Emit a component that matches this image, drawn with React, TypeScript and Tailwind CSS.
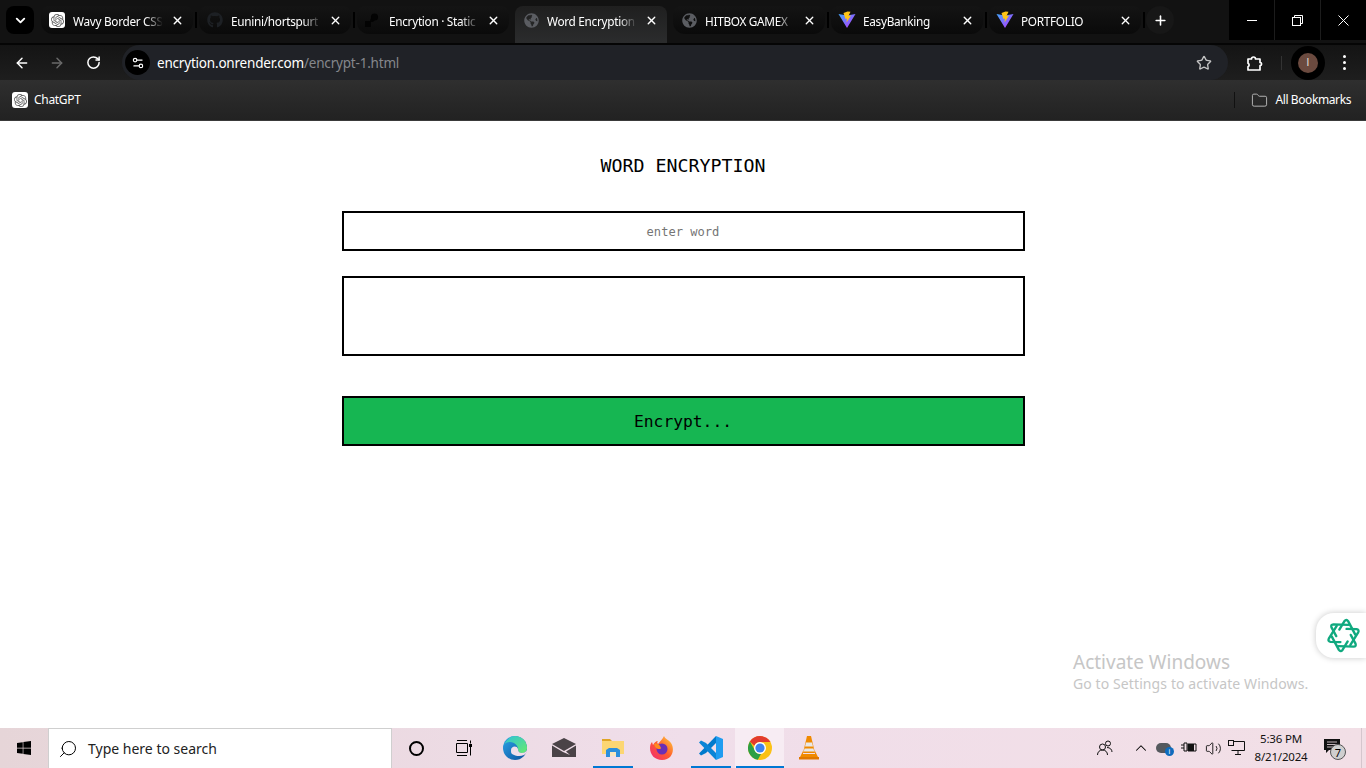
import {
  ArrowLeft,
  ArrowRight,
  ChevronDown,
  ChevronUp,
  Folder,
  Plus,
  RotateCw,
  Search,
  Settings2,
  Star,
  Volume2,
  X,
} from 'lucide-react'
import { FaGithub, FaGlobeAmericas, FaWindows } from 'react-icons/fa'
import { SiOpenai } from 'react-icons/si'

const uiFont = "font-['Noto_Sans',sans-serif]"

function ChatGptIcon({ size = 16 }: { size?: number }) {
  return (
    <span className="flex shrink-0 items-center justify-center rounded-[3px] bg-white" style={{ width: size, height: size }}>
      <SiOpenai className="text-[#5f5f5f]" size={size - 3} />
    </span>
  )
}

function RenderIcon() {
  return (
    <svg width="16" height="16" viewBox="0 0 16 16" className="shrink-0">
      <rect x="0" y="9" width="6" height="6" fill="#030303" />
      <path d="M5 10c0-3 1-4 3-5l2 3-2 2z" fill="#030303" />
      <circle cx="9.5" cy="5" r="3.6" fill="#030303" />
    </svg>
  )
}

function ViteIcon() {
  return (
    <svg width="18" height="18" viewBox="0 0 18 18" className="shrink-0">
      <defs>
        <linearGradient id="vitea" x1="0" y1="0" x2="1" y2="1">
          <stop offset="0" stopColor="#41a6ff" />
          <stop offset="1" stopColor="#bd34fe" />
        </linearGradient>
      </defs>
      <path d="M0.5 3 L9 17 L17.5 3 L9 4.5 Z" fill="url(#vitea)" />
      <path d="M9.5 0.5 L5.5 2 L7.5 8 L9 7.5 L8.5 11.5 L13 4.5 L10.5 5 L12.5 0.8 Z" fill="#ffc517" />
    </svg>
  )
}

const tabs = [
  { title: 'Wavy Border CSS', icon: <ChatGptIcon />, sep: true },
  { title: 'Eunini/hortspurt', icon: <FaGithub size={16} className="shrink-0 text-[#1d2024]" />, sep: true },
  { title: 'Encrytion · Static Site', icon: <RenderIcon />, sep: false },
  { title: 'Word Encryption', icon: <FaGlobeAmericas size={15} className="shrink-0 text-[#5b5d62]" />, active: true, sep: false },
  { title: 'HITBOX GAMEX', icon: <FaGlobeAmericas size={15} className="shrink-0 text-[#5b5d62]" />, sep: true },
  { title: 'EasyBanking', icon: <ViteIcon />, sep: true },
  { title: 'PORTFOLIO', icon: <ViteIcon />, sep: true },
]

function TabStrip() {
  return (
    <div className="flex h-[43px] items-start bg-[#121212] pl-[6px]">
      <div className="mt-[6px] mr-[6px] flex h-[28px] w-[28px] items-center justify-center rounded-lg bg-black">
        <ChevronDown size={15} strokeWidth={3} className="text-white" />
      </div>
      {tabs.map((tab) => (
        <div key={tab.title} className="relative h-[43px] w-[158px] shrink-0">
          <div
            className={
              tab.active
                ? 'mt-[6px] ml-px flex h-[37px] w-[152px] items-start rounded-t-lg bg-gradient-to-b from-[#1f1f1f] to-[#2b2c2d] pt-[6px] pl-[8px]'
                : 'mt-[6px] ml-px flex h-[28px] w-[152px] items-center rounded-t-lg rounded-b-xl bg-gradient-to-b from-[#141414] to-[#0a0a0a] pl-[8px]'
            }
          >
            <div className={tab.active ? 'flex h-[17px] items-center' : 'flex items-center'}>
              <span className="flex w-[16px] items-center justify-center">{tab.icon}</span>
              <span className="mt-px ml-[8px] w-[90px] overflow-hidden text-[11.8px] leading-[16px] tracking-[-0.3px] whitespace-nowrap text-white [mask-image:linear-gradient(to_right,black_80%,transparent)]">
                {tab.title}
              </span>
              <X size={13} strokeWidth={2.5} className="ml-[8px] text-white" />
            </div>
          </div>
          {tab.sep && <div className="absolute top-[12px] left-[155px] h-[16px] w-[2px] bg-black" />}
        </div>
      ))}
      <div className="mt-[6px] flex h-[28px] w-[28px] items-center justify-center rounded-full bg-[#171717]">
        <Plus size={15} strokeWidth={2.5} className="text-white" />
      </div>
      <div className="ml-auto flex h-[40px] text-white">
        <div className="flex w-[46px] items-center justify-center border-r border-[#1c1c1c] bg-black">
          <span className="h-px w-[10px] bg-white" />
        </div>
        <div className="flex w-[46px] items-center justify-center border-r border-[#1c1c1c] bg-black">
          <svg width="11" height="11" viewBox="0 0 11 11" fill="none" stroke="white">
            <rect x="0.5" y="2.5" width="8" height="8" fill="black" />
            <path d="M2.5 2.5V0.5H10.5V8.5H8.5" />
          </svg>
        </div>
        <div className="flex w-[45px] items-center justify-center bg-black">
          <svg width="11" height="11" viewBox="0 0 11 11" fill="none" stroke="white">
            <path d="M0.5 0.5L10.5 10.5M10.5 0.5L0.5 10.5" />
          </svg>
        </div>
      </div>
    </div>
  )
}

function Toolbar() {
  return (
    <div className="flex h-[37px] items-center border-t-2 border-[#050505] bg-gradient-to-b from-[#141414] to-[#1e1e1e]">
      <ArrowLeft size={16} strokeWidth={2.2} className="ml-[14px] text-white" />
      <ArrowRight size={16} strokeWidth={2.2} className="ml-[19px] text-[#6a6a6a]" />
      <RotateCw size={15} strokeWidth={2.4} className="ml-[21px] text-white" />
      <div className="ml-[21px] flex h-[35px] w-[1106px] items-center rounded-full bg-[#202227]">
        <div className="ml-[3px] flex h-[25px] w-[25px] items-center justify-center rounded-full bg-black">
          <Settings2 size={14} className="text-white" />
        </div>
        <span className={`mt-[2px] ml-[7px] text-[13.5px] tracking-[-0.2px] text-white ${uiFont}`}>
          encrytion.onrender.com<span className="text-[#85878c]">/encrypt-1.html</span>
        </span>
        <Star size={16} strokeWidth={2} className="mr-[16px] ml-auto text-[#c4c4c4]" />
      </div>
      <svg width="18" height="18" viewBox="0 0 18 18" fill="none" stroke="white" strokeWidth="1.7" className="ml-[18px]">
        <path d="M2 5h3.5a2 2 0 0 1 4 0H14v3.5a1.6 1.6 0 0 1 0 3.2V16H2v-3.2a2 2 0 0 0 0-3.6z" strokeLinejoin="round" />
      </svg>
      <div className="ml-[17px] h-[14px] w-px bg-[#333]" />
      <div className="ml-[9px] flex h-[34px] w-[34px] items-center justify-center rounded-full bg-black">
        <div className="flex h-[20px] w-[20px] items-center justify-center rounded-full bg-[#6b4a3f] font-['Liberation_Sans',sans-serif] text-[10px] text-[#e8e0dc]">
          I
        </div>
      </div>
      <div className="ml-[18px] flex flex-col gap-[3px]">
        <span className="h-[3px] w-[3px] rounded-full bg-white" />
        <span className="h-[3px] w-[3px] rounded-full bg-white" />
        <span className="h-[3px] w-[3px] rounded-full bg-white" />
      </div>
    </div>
  )
}

function BookmarksBar() {
  return (
    <div className={`flex h-[41px] items-center border-b border-[#3a3a3a] bg-gradient-to-b from-[#2f2f2f] to-[#222] text-[12px] tracking-[-0.3px] text-white ${uiFont}`}>
      <span className="ml-[12px]">
        <ChatGptIcon />
      </span>
      <span className="ml-[6px]">ChatGPT</span>
      <div className="ml-auto h-[16px] w-px bg-[#111]" />
      <Folder size={17} strokeWidth={1.3} className="ml-[16px] text-[#bdbdbd]" />
      <span className="mr-[15px] ml-[7px] tracking-[-0.4px]">All Bookmarks</span>
    </div>
  )
}

const knotAngles = [0, 60, 120, 180, 240, 300]

function EncryptForm() {
  return (
    <main className="relative flex h-[607px] flex-col items-center bg-white font-['DejaVu_Sans_Mono',monospace] text-black">
      <h1 className="mt-[33px] text-[18.3px] leading-[24px]">WORD ENCRYPTION</h1>
      <input
        readOnly
        placeholder="enter word"
        className="mt-[33px] h-[40px] w-[683px] border-2 border-black pt-[2px] text-center text-[12.1px] outline-none placeholder:text-[#757575]"
      />
      <div className="mt-[25px] h-[80px] w-[683px] border-2 border-black" />
      <button className="mt-[40px] h-[50px] w-[683px] border-2 border-black bg-[#16b652] pt-[2px] text-[16.3px]">Encrypt...</button>

      <div className="absolute top-[492px] right-0 flex h-[45px] w-[50px] items-center justify-center rounded-l-[18px] bg-white pl-[4px] shadow-[0_0_6px_rgba(0,0,0,0.22)]">
        <svg width="35" height="37" viewBox="-17 -18 34 36" fill="none" stroke="#10a97f" strokeWidth="2.3" strokeLinecap="round" strokeLinejoin="round">
          {knotAngles.map((angle) => (
            <path key={angle} d="M-5 -5 L-1.5 -14 Q0 -16.5 2 -14.5 L11 -3" transform={`rotate(${angle + 10})`} />
          ))}
        </svg>
      </div>

      <div className={`absolute top-[529px] left-[1073px] text-[#c6c6c6] ${uiFont}`}>
        <div className="text-[19px] leading-[24px]">Activate Windows</div>
        <div className="text-[14px] leading-[20px] tracking-[0.1px]">Go to Settings to activate Windows.</div>
      </div>
    </main>
  )
}

function EdgeIcon() {
  return (
    <svg width="24" height="24" viewBox="0 0 24 24">
      <defs>
        <linearGradient id="edgea" x1="0" y1="0" x2="1" y2="1">
          <stop offset="0" stopColor="#2ba5e8" />
          <stop offset="1" stopColor="#0c4f9c" />
        </linearGradient>
        <linearGradient id="edgeb" x1="0" y1="0" x2="1" y2="1">
          <stop offset="0" stopColor="#2fc2d8" />
          <stop offset="1" stopColor="#66eb6e" />
        </linearGradient>
      </defs>
      <circle cx="12" cy="12" r="12" fill="url(#edgea)" />
      <path d="M12 0a12 12 0 0 1 12 12c0 3-2 5-5 5-3 0-4-2-4-4 0-3-3-7-8-7-3 0-5 1-6 3C3 4 7 0 12 0z" fill="url(#edgeb)" />
      <path d="M8 14c0-4 6-5 7-1 0 3 2 4 4 4s4-1 5-3c0 2-1 4-3 5-4 2-9 1-12-1-1-1-1-2-1-4z" fill="#f0deea" />
    </svg>
  )
}

function MailIcon() {
  return (
    <svg width="24" height="20" viewBox="0 0 24 20">
      <path d="M0 6 L12 0 L24 6 L12 13 Z" fill="#4a4347" />
      <path d="M0 7.5 V19 H24 V7.5 L14 13.5 L18 17 L11 14 Z" fill="#4a4347" />
    </svg>
  )
}

function ExplorerIcon() {
  return (
    <svg width="22" height="20" viewBox="0 0 22 20">
      <path d="M0 1h8l2 2h-10z" fill="#e0a526" />
      <path d="M0 3h22v13H0z" fill="#fcd672" />
      <path d="M4 16v-4l3-2h8l3 2v4z" fill="#2b8fdc" />
      <path d="M8 14h6v4H8z" fill="#f7e6bd" />
      <path d="M4 16h4v3H4zM14 16h4v3h-4z" fill="#2b8fdc" />
    </svg>
  )
}

function FirefoxIcon() {
  return (
    <svg width="24" height="24" viewBox="0 0 24 24">
      <defs>
        <linearGradient id="ffa" x1="1" y1="0" x2="0" y2="1">
          <stop offset="0" stopColor="#ffd53d" />
          <stop offset="0.5" stopColor="#ff5a2c" />
          <stop offset="1" stopColor="#f0267d" />
        </linearGradient>
      </defs>
      <path d="M14 0c1 3 5 4 7 7 4 6 2 17-9 17C5 24 0 19 0 12c0-3 1-5 2-6l1 3c1-2 3-4 5-4-1 1-1 2 0 3 2-3 5-5 6-8z" fill="url(#ffa)" />
      <circle cx="12" cy="13" r="5.5" fill="#6b2fb5" />
      <path d="M4 8c2-1 5 0 6 2s2 3-1 3c-2 0-4-1-5-5z" fill="#ff8a1f" />
    </svg>
  )
}

function VsCodeIcon() {
  return (
    <svg width="24" height="24" viewBox="0 0 24 24">
      <path d="M17 0 L24 3 V21 L17 24 Z" fill="#1f9cf0" />
      <path d="M17 0 V7 L7 17 L2 19.5 L0 17.5 Z" fill="#007acc" />
      <path d="M17 24 V17 L7 7 L2 4.5 L0 6.5 Z" fill="#0a84d6" />
    </svg>
  )
}

function ChromeIcon() {
  return (
    <svg width="24" height="24" viewBox="0 0 24 24">
      <circle cx="12" cy="12" r="12" fill="#fbc116" />
      <path d="M12 0a12 12 0 0 1 10.4 6H12a6 6 0 0 0-5.6 3.8L1.9 5.5A12 12 0 0 1 12 0z" fill="#e33b2e" />
      <path d="M1.9 5.5 7 14.5A6 6 0 0 0 13 18l-3.2 5.8A12 12 0 0 1 1.9 5.5z" fill="#2c9f45" />
      <circle cx="12" cy="12" r="6" fill="white" />
      <circle cx="12" cy="12" r="4.6" fill="#3f82ef" />
    </svg>
  )
}

function VlcIcon() {
  return (
    <svg width="20" height="24" viewBox="0 0 20 24">
      <path d="M8 0h4l4 17H4z" fill="#f08a00" />
      <path d="M7 6.5h6l1 4H6zM5.5 12.5h9l.7 3H4.8z" fill="#e8e8e8" />
      <path d="M4 15l-3 6h18l-3-6v3H4z" fill="#f08a00" />
      <path d="M0 21h20v2.5H0z" fill="#e07800" />
    </svg>
  )
}

const taskbarApps = [
  { name: 'edge', icon: <EdgeIcon /> },
  { name: 'mail', icon: <MailIcon /> },
  { name: 'explorer', icon: <ExplorerIcon />, running: true },
  { name: 'firefox', icon: <FirefoxIcon /> },
  { name: 'vscode', icon: <VsCodeIcon />, running: true },
  { name: 'chrome', icon: <ChromeIcon />, active: true },
  { name: 'vlc', icon: <VlcIcon /> },
]

function Taskbar() {
  return (
    <div className={`flex h-[40px] items-stretch bg-gradient-to-r from-[#e6d5d8] via-[#f0deea] to-[#f2dfe6] ${uiFont}`}>
      <div className="flex w-[48px] items-center justify-center">
        <FaWindows size={16} className="text-black" />
      </div>
      <div className="flex w-[344px] items-center border border-b-0 border-[#cfcfcf] bg-white pl-[9px] text-[14px] text-[#222]">
        <Search size={20} strokeWidth={1.2} className="-scale-x-100 text-black" />
        <span className="ml-[10px]">Type here to search</span>
      </div>
      <div className="flex w-[48px] items-center justify-center">
        <span className="h-[15px] w-[15px] rounded-full border-2 border-black" />
      </div>
      <div className="mr-[2px] flex w-[48px] items-center justify-center">
        <svg width="16" height="16" viewBox="0 0 16 16" fill="none" stroke="black">
          <path d="M1 .5h10M1 15.5h10M.5 3.5h11v9H.5zM14.5 .5v3M14.5 7v8.5" />
          <rect x="13" y="4" width="3" height="3" fill="black" stroke="none" />
        </svg>
      </div>
      {taskbarApps.map((app) => (
        <div
          key={app.name}
          className={
            app.active
              ? 'relative flex w-[49px] items-center justify-center bg-[#f7ecf3]'
              : 'relative flex w-[49px] items-center justify-center'
          }
        >
          {app.icon}
          {app.running && <span className="absolute right-[4px] bottom-0 left-[5px] h-[2px] bg-[#0078d4]" />}
          {app.active && <span className="absolute right-0 bottom-0 left-px h-[2px] bg-[#0078d4]" />}
        </div>
      ))}
      <div className="ml-auto flex items-center text-black">
        <svg width="18" height="18" viewBox="0 0 18 18" fill="none" stroke="#111">
          <circle cx="6.5" cy="8" r="3" />
          <circle cx="12" cy="4.5" r="2.5" />
          <path d="M1.5 16c0-3 2-5 5-5s5 2 5 5M11 8.5c3 0 5 2 5 4.5" />
        </svg>
        <ChevronUp size={18} strokeWidth={1.4} className="ml-[18px]" />
        <div className="relative ml-[6px] h-[16px] w-[18px]">
          <span className="absolute top-[3px] left-0 h-[10px] w-[15px] rounded-full bg-[#55595e]" />
          <span className="absolute right-0 bottom-0 flex h-[9px] w-[9px] items-center justify-center rounded-full bg-[#0f6cbd] text-[7px] leading-none text-white">
            i
          </span>
        </div>
        <svg width="16" height="12" viewBox="0 0 16 12" className="ml-[7px]">
          <path d="M0 3h3M0 6h3M3 1h3v8H3zM7 2h8v7H7z" fill="none" stroke="#111" />
          <rect x="7" y="2" width="6" height="7" fill="#111" />
        </svg>
        <Volume2 size={17} strokeWidth={1.2} className="ml-[8px]" />
        <svg width="17" height="16" viewBox="0 0 17 16" fill="none" stroke="#111" className="ml-[6px]">
          <path d="M3.5 1.5H16.5V10.5H3.5M7 14.5H13M10 10.5V14.5" />
          <rect x="0.5" y="0.5" width="5" height="5" fill="#f2dfe6" />
        </svg>
        <div className="w-[72px] text-center text-[11.5px] leading-[18px] tracking-[-0.2px] text-[#111]">
          <div>5:36 PM</div>
          <div>8/21/2024</div>
        </div>
        <div className="relative mr-[17px] ml-[7px] h-[20px] w-[20px]">
          <svg width="16" height="15" viewBox="0 0 16 15" className="absolute top-[1px] left-0">
            <path d="M0 0h16v11H5l-3 3v-3H0z" fill="#111" />
            <path d="M3 3h10M3 5.5h10M3 8h10" stroke="#f2dfe6" strokeWidth="0.8" />
          </svg>
          <span className="absolute top-[6px] left-[6px] flex h-[16px] w-[16px] items-center justify-center rounded-full border border-[#555] bg-[#cfcfcf] text-[11px] leading-none text-black">
            7
          </span>
        </div>
        <div className="h-full w-[5px] border-l border-[#d5c6cd]" />
      </div>
    </div>
  )
}

export default function App() {
  return (
    <div className={`flex h-[768px] w-[1366px] flex-col overflow-hidden ${uiFont}`}>
      <TabStrip />
      <Toolbar />
      <BookmarksBar />
      <EncryptForm />
      <Taskbar />
    </div>
  )
}
